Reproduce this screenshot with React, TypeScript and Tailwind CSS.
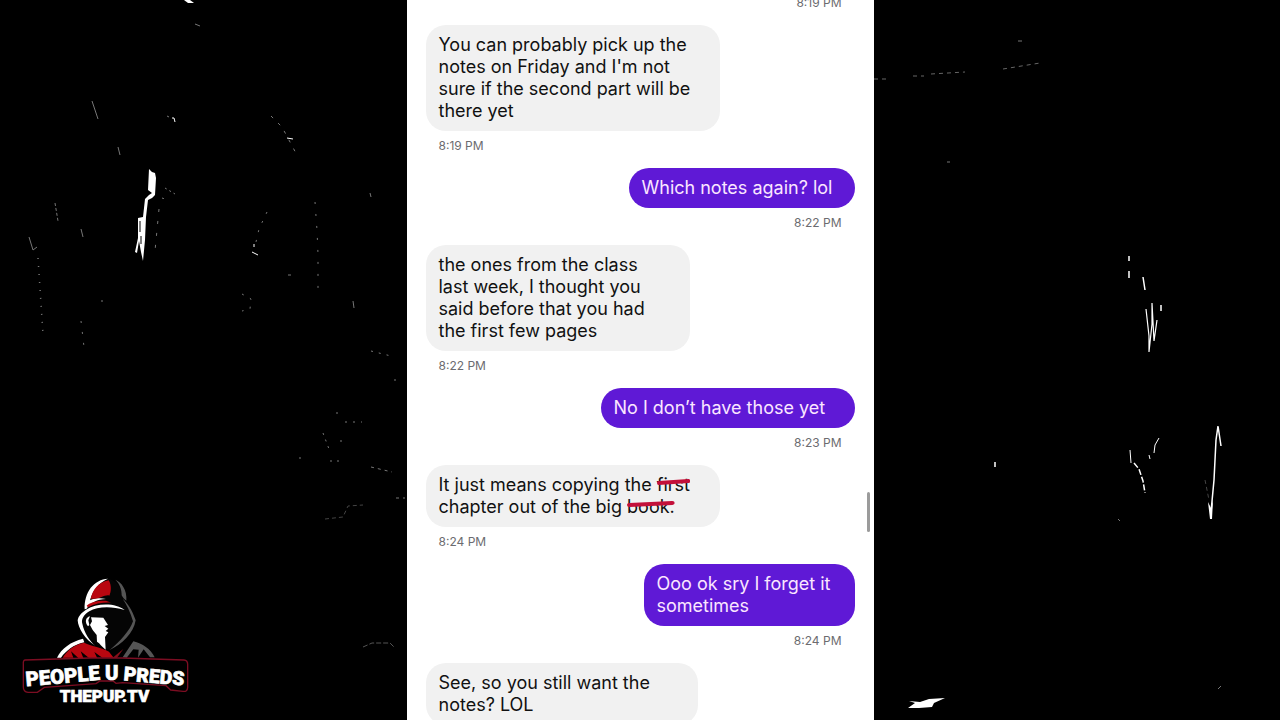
import clsx from "clsx";

type Message = {
  mine: boolean;
  lines: string[];
  time?: string;
  width: string;
};

const messages: Message[] = [
  { mine: false, lines: ["You can probably pick up the", "notes on Friday and I'm not", "sure if the second part will be", "there yet"], time: "8:19 PM", width: "w-[294px]" },
  { mine: true, lines: ["Which notes again? lol"], time: "8:22 PM", width: "w-[226px]" },
  { mine: false, lines: ["the ones from the class", "last week, I thought you", "said before that you had", "the first few pages"], time: "8:22 PM", width: "w-[264px]" },
  { mine: true, lines: ["No I don’t have those yet"], time: "8:23 PM", width: "w-[254px]" },
  { mine: false, lines: ["It just means copying the ~first~", "chapter out of the big ~book.~"], time: "8:24 PM", width: "w-[294px]" },
  { mine: true, lines: ["Ooo ok sry I forget it", "sometimes"], time: "8:24 PM", width: "w-[211px]" },
  { mine: false, lines: ["See, so you still want the", "notes? LOL"], width: "w-[272px]" },
];

// ~word~ is drawn with a marker stroke over it
function Line({ text }: { text: string }) {
  return (
    <span className="block whitespace-nowrap">
      {text.split("~").map((part, i) =>
        i % 2 === 1 ? (
          <span key={i} className="relative">
            {part}
            <svg className="absolute inset-x-0 top-1 h-2 w-full" viewBox="0 0 40 8" preserveAspectRatio="none">
              <path d="M2 5 L38 3" stroke="#c3103a" strokeWidth="4" strokeLinecap="round" />
            </svg>
          </span>
        ) : (
          part
        )
      )}
    </span>
  );
}

function Time({ mine, value }: { mine: boolean; value: string }) {
  return (
    <time className={clsx("px-[13px] pt-2 pb-4 text-[12px] leading-[13px] text-[#6c6c70]", mine && "text-right")}>
      {value}
    </time>
  );
}

function Bubble({ message }: { message: Message }) {
  return (
    <li className="flex flex-col">
      <p
        className={clsx(
          "rounded-[20px] px-[13px] py-[9px] text-[18px] leading-[22px]",
          message.width,
          message.mine ? "self-end bg-[#5f19d6] text-[#fbe6ff]" : "self-start bg-[#f1f1f1] text-[#111111]"
        )}
      >
        {message.lines.map((line) => (
          <Line key={line} text={line} />
        ))}
      </p>
      {message.time && <Time mine={message.mine} value={message.time} />}
    </li>
  );
}

function Scratches() {
  return (
    <svg className="absolute inset-0 h-full w-full" viewBox="0 0 1280 720" preserveAspectRatio="xMidYMid slice" fill="none" aria-hidden="true">
      <g fill="#fff">
        <path d="M184 0 L190 0 L194 3 L188 3 Z" />
        <path d="M149 169 L152 172 L155 173 L156 178 L155 195 L152 198 L148 200 L146 217 L145 240 L143 261 L141 252 L139 241 L137 253 L135 252 L138 238 L138 218 L143 217 L145 199 L149 195 L152 193 L148 190 Z" />
        <path d="M908 708 L915 703 L909 701 L920 702 L929 699 L945 698 L934 703 L932 707 L919 708 Z" />
        <path d="M1208 502 L1211 508 L1213 500 L1212 519 L1210 519 Z" />
      </g>
      <path d="M140 221 V232 M141 236 V244" stroke="#000" strokeWidth="1" />
      <g stroke="#fff">
        <path d="M1146 309 L1149 336 L1149 352 L1152 324 L1152 303 L1154 341 L1157 320" strokeWidth="1.2" />
        <path d="M1211 512 L1214 480 L1216 440 L1218 426 L1221 446" strokeWidth="1.5" />
        <path d="M1134 463 L1139 469 L1143 481 L1145 493" strokeWidth="1.5" strokeDasharray="6 2" />
        <path d="M1159 438 L1155 445 L1154 453 M1149 455 L1150 459 M1130 450 L1131 463" />
        <path d="M1129 256 V261 M1129 271 V278 M1143 277 L1145 290 M1161 305 V311 M995 462 V467" strokeWidth="1.5" />
        <path d="M172 118 L174 118 L175 122 M287 138 L293 139 M254 244 V247 M252 252 L258 255" />
      </g>
      <g stroke="#777">
        <path d="M92 101 L98 119 M118 147 L120 155 M29 237 L33 250 L37 247 M81 229 L83 237 M195 24 L200 26 M167 116 L169 117" />
        <path d="M55 203 L58 221" strokeDasharray="3 2" />
        <path d="M38 258 L43 334" strokeDasharray="1 7" strokeWidth="1.5" />
        <path d="M81 321 L84 347 M102 300 V308" strokeDasharray="2 9" />
        <path d="M159 209 L155 251" strokeDasharray="3 9" />
        <path d="M165 188 L175 194 M162 198 L165 199" strokeDasharray="2 3" />
        <path d="M271 116 L282 127 L298 157" strokeDasharray="3 7" />
        <path d="M267 212 L259 229 L256 242" strokeDasharray="2 8" />
        <path d="M315 202 L317 230 L318 254 L318 294" strokeDasharray="2 10" />
        <path d="M242 294 L251 299 L250 309 L242 311" strokeDasharray="2 7" />
        <path d="M370 193 L371 197 M288 275 H291 M353 301 L354 308" />
        <path d="M371 351 L391 356 M394 380 H396 M337 412 V414 M345 422 H362" strokeDasharray="2 6" />
        <path d="M323 433 L329 449 M341 440 V442 M330 461 H339 M299 458 H301" strokeDasharray="2 5" />
        <path d="M371 467 L392 472 M396 498 H405" strokeDasharray="3 4" />
        <path d="M325 519 L343 517 L348 506 L363 505" strokeDasharray="4 3" stroke="#444" />
        <path d="M363 647 L372 643 L390 643 L395 648" strokeDasharray="5 2" stroke="#555" />
        <path d="M874 79 L889 79 M913 76 H924 M931 74 L965 72 M1003 69 L1040 63" strokeDasharray="4 4" stroke="#666" />
        <path d="M1018 41 H1022 M947 162 H950 M1118 519 L1120 521 M1218 689 L1221 686" />
        <path d="M1205 480 L1209 500" stroke="#444" strokeDasharray="4 3" />
      </g>
    </svg>
  );
}

function Logo() {
  return (
    <svg className="h-[140px] w-[190px] shrink-0" viewBox="0 0 570 420" role="img" aria-label="People U Preds">
      {/* hood */}
      <path d="M226 111 C228 62 252 29 294 27 C322 30 337 58 342 91 L371 137 L376 155 C360 195 330 224 299 240 C250 225 208 182 205 151 C205 137 218 122 226 111 Z" fill="#050505" />
      <path d="M224 118 C222 66 252 28 294 26 C266 38 248 62 240 91 C256 84 270 84 288 87 C262 88 241 98 230 116 Z" fill="#fff" />
      <path d="M242 86 C249 58 264 38 296 31 C305 45 304 66 298 77 C288 72 262 90 250 86 Z" fill="#b90710" />
      <path d="M230 107 C242 96 262 91 288 92 L304 98 C280 97 256 100 234 112 Z" fill="#b90710" />
      <path d="M227 120 C261 97 319 99 344 120 C302 108 262 110 238 124 C221 134 213 149 217 161 C222 187 240 214 256 227 C225 209 204 174 203 151 C205 137 217 127 227 120 Z" fill="#fff" />
      <path d="M316 29 C334 36 352 60 349 92 C343 88 338 82 335 76 C335 60 330 42 316 29 Z" fill="#555" />
      <path d="M338 86 C350 96 366 118 377 151 C371 190 336 223 299 240 C330 215 359 183 369 154 C361 126 350 104 338 86 Z" fill="#555" />
      {/* face */}
      <path d="M240 139 C226 142 224 157 234 169 L238 165 L235 151 Z M243 142 L280 143 L294 165 L284 168 L295 176 L287 183 L295 187 L285 201 L287 239 C276 231 270 220 261 215 L260 195 L248 180 L240 165 L246 154 Z" fill="#fff" />
      {/* shoulders */}
      <path d="M141 263 C154 235 183 215 219 206 L223 217 C190 224 168 243 153 263 Z" fill="#fff" />
      <path d="M158 263 C172 240 194 223 223 218 C244 229 270 230 297 245 L311 263 H277 L253 246 L262 265 H238 L212 244 L220 264 H205 L183 244 L190 263 Z" fill="#b90710" />
      <path d="M308 263 L340 237 L319 266 Z" fill="#86101a" />
      <path d="M338 262 L370 214 C397 220 422 237 434 262 H420 L401 238 L384 263 L386 239 L370 238 L350 263 Z" fill="#555" />
      {/* name plate */}
      <path d="M45 270 L240 264 H335 L522 270 Q533 271 533 283 V352 Q532 366 519 364 L482 360 L468 347 L338 338 L318 340 L309 333 H270 L258 341 L103 352 L82 367 H54 Q40 366 40 351 V283 Q39 271 45 270 Z" fill="#000" stroke="#7c0d22" strokeWidth="4" />
      <g fill="#fff" stroke="#fff" strokeWidth="2" className="font-[Roboto] font-black">
        <text x="49" y="349" fontSize="61" transform="rotate(-5 49 349)">PEOPLE</text>
        <text x="285" y="329" fontSize="61">U</text>
        <text x="340" y="331" fontSize="58" transform="rotate(5 340 331)">PREDS</text>
        <text x="149" y="396" fontSize="51">THEPUP.TV</text>
      </g>
    </svg>
  );
}

export default function App() {
  return (
    <div className="relative flex h-screen overflow-hidden bg-black font-[Inter,'Liberation_Sans',sans-serif]">
      <Scratches />
      <aside className="relative flex min-w-0 flex-1 items-end">
        <div className="p-[10px]">
          <Logo />
        </div>
      </aside>
      <main className="relative flex w-[467px] max-w-full bg-white pl-[19px]">
        <ol className="-mt-3 flex flex-1 flex-col">
          <li className="flex flex-col">
            <Time mine value="8:19 PM" />
          </li>
          {messages.map((message, i) => (
            <Bubble key={i} message={message} />
          ))}
        </ol>
        {/* scroll thumb */}
        <div className="flex h-full w-[19px] flex-col items-end pr-1">
          <div className="grow-[492]" />
          <div className="h-10 w-[3px] rounded-full bg-[#9b9b9b]" />
          <div className="grow-[188]" />
        </div>
      </main>
      <aside className="min-w-0 flex-1" />
    </div>
  );
}
